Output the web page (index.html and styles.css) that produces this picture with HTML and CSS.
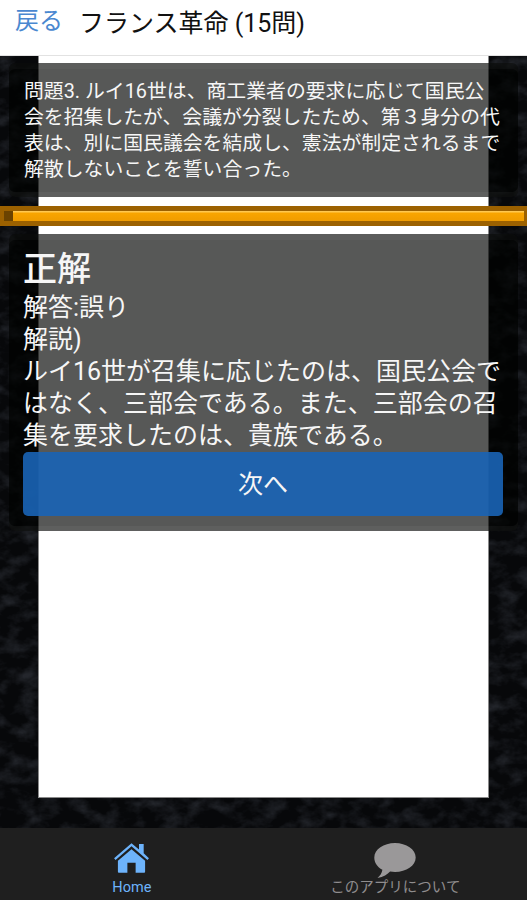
FILE: index.html
```html
<!DOCTYPE html>
<html lang="ja">
<head>
<meta charset="utf-8">
<title>フランス革命 (15問)</title>
<link rel="stylesheet" href="styles.css">
</head>
<body>
<div class="app">
  <header class="top">
    <a class="back">戻る</a>
    <h1 class="title">フランス革命 (15問)</h1>
  </header>
  <main class="main">
    <svg class="texture" width="527" height="772" aria-hidden="true">
      <filter id="stone" x="0" y="0" width="100%" height="100%" color-interpolation-filters="sRGB">
        <feTurbulence type="fractalNoise" baseFrequency="0.05 0.07" numOctaves="4" seed="11"/>
        <feColorMatrix type="matrix" values="0 0 0 0 0.5  0 0 0 0 0.53  0 0 0 0 0.6  2 0 0 0 -0.82"/>
      </filter>
      <rect width="527" height="772" fill="#07080a"/>
      <rect width="527" height="772" filter="url(#stone)" opacity="0.24"/>
    </svg>
    <div class="sheet"></div>
    <div class="content">
      <section class="panel question">
        <p class="qtext">問題3. ルイ16世は、商工業者の要求に応じて国民公<br>会を招集したが、会議が分裂したため、第３身分の代<br>表は、別に国民議会を結成し、憲法が制定されるまで<br>解散しないことを誓い合った。</p>
      </section>
      <div class="progress"><div class="progress-knob"></div><div class="progress-fill"></div></div>
      <section class="panel answer">
        <h2 class="verdict">正解</h2>
        <p class="line">解答:誤り</p>
        <p class="line">解説)</p>
        <p class="line">ルイ16世が召集に応じたのは、国民公会で<br>はなく、三部会である。また、三部会の召<br>集を要求したのは、貴族である。</p>
        <button class="next">次へ</button>
      </section>
    </div>
  </main>
  <nav class="tabs">
    <div class="tab active">
      <svg class="tab-icon home" width="37" height="30" viewBox="0 0 38 32">
        <path fill="#6db3fb" d="M27 1h5v10l5.600 5.200-1.600 1.900L19 3.400 2 18.100.4 16.200 19 .2l8 6.800z"/>
        <path fill="#6db3fb" d="M19 6.600 33.500 19v11.600a1 1 0 0 1-1 1H23.400V21h-8.800v10.600H5.500a1 1 0 0 1-1-1V19z"/>
      </svg>
      <span>Home</span>
    </div>
    <div class="tab">
      <svg class="tab-icon bubble" width="42" height="35" viewBox="0 0 42 35">
        <path fill="#9a9899" d="M21 0c11.300 0 20.700 6.400 20.700 14.500S32.300 29 21 29c-1.700 0-3.300-.1-4.900-.4C13.500 31.500 9.500 34 3.500 35c2.400-2 4.300-5 4.900-8.300C3.300 24.100.3 19.600.3 14.500.3 6.400 9.700 0 21 0z"/>
      </svg>
      <span>このアプリについて</span>
    </div>
  </nav>
</div>
</body>
</html>
```
FILE: styles.css
```css
* { box-sizing: border-box; }
html, body { margin: 0; padding: 0; }
body {
  background: #000;
  font-family: Roboto, "Noto Sans CJK JP", sans-serif;
}
.app {
  width: 527px;
  height: 900px;
  display: flex;
  flex-direction: column;
  overflow: hidden;
}
.top {
  height: 56px;
  flex: none;
  background: #fff;
  border-bottom: 1px solid #e2e2e2;
  display: flex;
  align-items: flex-start;
  padding: 6px 0 0 15px;
  gap: 16px;
}
.back {
  font-size: 24px;
  line-height: 30px;
  color: #4a88d0;
}
.title {
  margin: 2px 0 0;
  font-size: 25px;
  line-height: 32px;
  font-weight: 400;
  color: #111;
}
.main {
  position: relative;
  height: 772px;
  flex: none;
  overflow: hidden;
}
.texture {
  position: absolute;
  left: 0;
  top: 0;
  display: block;
}
.sheet {
  position: absolute;
  left: 39px;
  top: 0;
  width: 449px;
  height: 741px;
  background: #fff;
  box-shadow: 0 0 0 1px #8a8a8a;
}
.content {
  position: relative;
  padding-top: 7px;
  display: flex;
  flex-direction: column;
}
.panel {
  margin: 0 9px;
  border-radius: 6px;
  background: rgba(0, 2, 0, 0.66);
  box-shadow: inset 0 6px 0 rgba(255, 255, 255, 0.03), inset 0 -5px 0 rgba(255, 255, 255, 0.045);
}
.question {
  height: 134px;
  padding: 16px 15px 0;
}
.qtext {
  margin: 0;
  font-size: 19.85px;
  line-height: 26px;
  color: #f6f6f6;
  white-space: nowrap;
}
.progress {
  margin-top: 9px;
  height: 20px;
  background: #9c6100;
  padding: 5px 3px 5px 4px;
  display: flex;
}
.progress-knob {
  width: 9px;
  background: #6b4300;
}
.progress-fill {
  flex: 1;
  background: linear-gradient(#ffc850 0, #ffc850 1px, #f9a500 2px, #f09c00 100%);
}
.answer {
  margin-top: 8px;
  height: 297px;
  padding: 14px 14px 0;
  color: #f6f6f6;
}
.verdict {
  margin: 0 0 1px;
  font-size: 34px;
  line-height: 43px;
  font-weight: 500;
}
.line {
  margin: 0;
  font-size: 25px;
  line-height: 32px;
  white-space: nowrap;
}
.next {
  display: block;
  width: 480px;
  height: 64px;
  margin: 0;
  padding: 0 0 4px;
  border: 0;
  border-radius: 5px;
  background: rgba(25, 100, 182, 0.9);
  color: #f6f6f6;
  font-family: inherit;
  font-size: 25px;
}
.tabs {
  height: 72px;
  flex: none;
  background: #1f1f1f;
  display: flex;
}
.tab {
  width: 50%;
  display: flex;
  flex-direction: column;
  align-items: center;
  padding-top: 15px;
  font-size: 14.5px;
  color: #8f8d8e;
}
.tab.active {
  color: #6db3fb;
  width: 264px;
}
.tab span {
  line-height: 18px;
}
.tab-icon {
  display: block;
  flex: none;
}
.home {
  margin-bottom: 6px;
}
.bubble {
  margin-bottom: 1px;
}
```
